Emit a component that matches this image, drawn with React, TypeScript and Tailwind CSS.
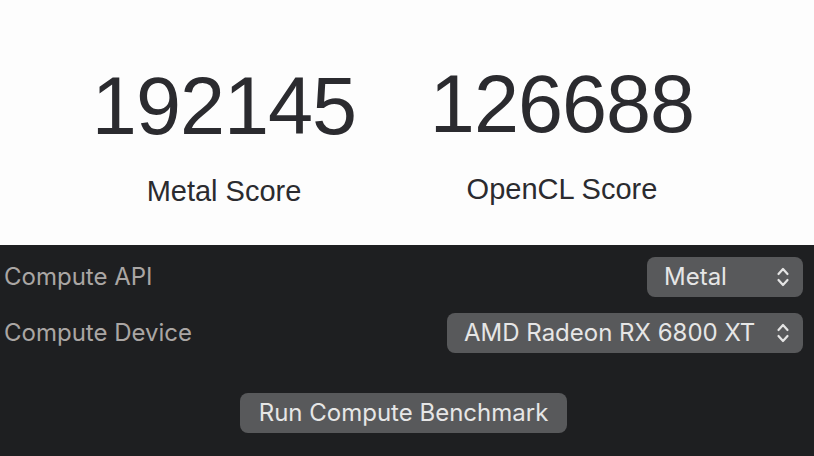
import React from "react";

function Chevrons() {
  return (
    <svg width="14" height="24" viewBox="0 0 14 24" fill="none" className="shrink-0">
      <path d="M2.5 9 L7 4 L11.5 9" stroke="#e4e4e4" strokeWidth="2.2" strokeLinecap="round" strokeLinejoin="round" />
      <path d="M2.5 15 L7 20 L11.5 15" stroke="#e4e4e4" strokeWidth="2.2" strokeLinecap="round" strokeLinejoin="round" />
    </svg>
  );
}

function Popup({ value, width }: { value: string; width: string }) {
  return (
    <div
      className={`flex h-10 items-center justify-between rounded-[8px] bg-[#58595b] pl-[17px] pr-[13px] text-[24px] text-[#e6e6e6] ${width}`}
    >
      <span>{value}</span>
      <Chevrons />
    </div>
  );
}

function Score({ value, label, shift }: { value: string; label: string; shift: string }) {
  return (
    <div className={`flex w-[338px] flex-col items-center ${shift}`}>
      <div className="text-[81px] leading-none tracking-[-1px] text-[#2b2b2f]">{value}</div>
      <div className="mt-[30px] text-[29px] leading-none text-[#2b2b2f]">{label}</div>
    </div>
  );
}

export default function App() {
  return (
    <div className="flex h-[456px] w-[814px] flex-col overflow-hidden">
      <div
        className="flex h-[245px] bg-[#fdfdfd] pl-[55px] pt-[66px]"
        style={{ fontFamily: '"Liberation Sans", Arial, sans-serif' }}
      >
        <Score value="192145" label="Metal Score" shift="" />
        <Score value="126688" label="OpenCL Score" shift="-mt-[2px]" />
      </div>
      <div
        className="flex flex-1 flex-col bg-[#1e1f21] pl-[4px] pr-[11px] pt-[12px]"
        style={{ fontFamily: 'Inter, "Noto Sans", sans-serif' }}
      >
        <div className="flex items-center justify-between">
          <span className="text-[24px] text-[#aaa6a4]">Compute API</span>
          <Popup value="Metal" width="w-[156px]" />
        </div>
        <div className="mt-4 flex items-center justify-between">
          <span className="text-[24px] text-[#aaa6a4]">Compute Device</span>
          <Popup value="AMD Radeon RX 6800 XT" width="w-[356px]" />
        </div>
        <div className="mt-10 flex justify-center">
          <button className="h-10 w-[327px] rounded-[8px] bg-[#58595b] text-[24px] text-[#e6e6e6]">
            Run Compute Benchmark
          </button>
        </div>
      </div>
    </div>
  );
}
